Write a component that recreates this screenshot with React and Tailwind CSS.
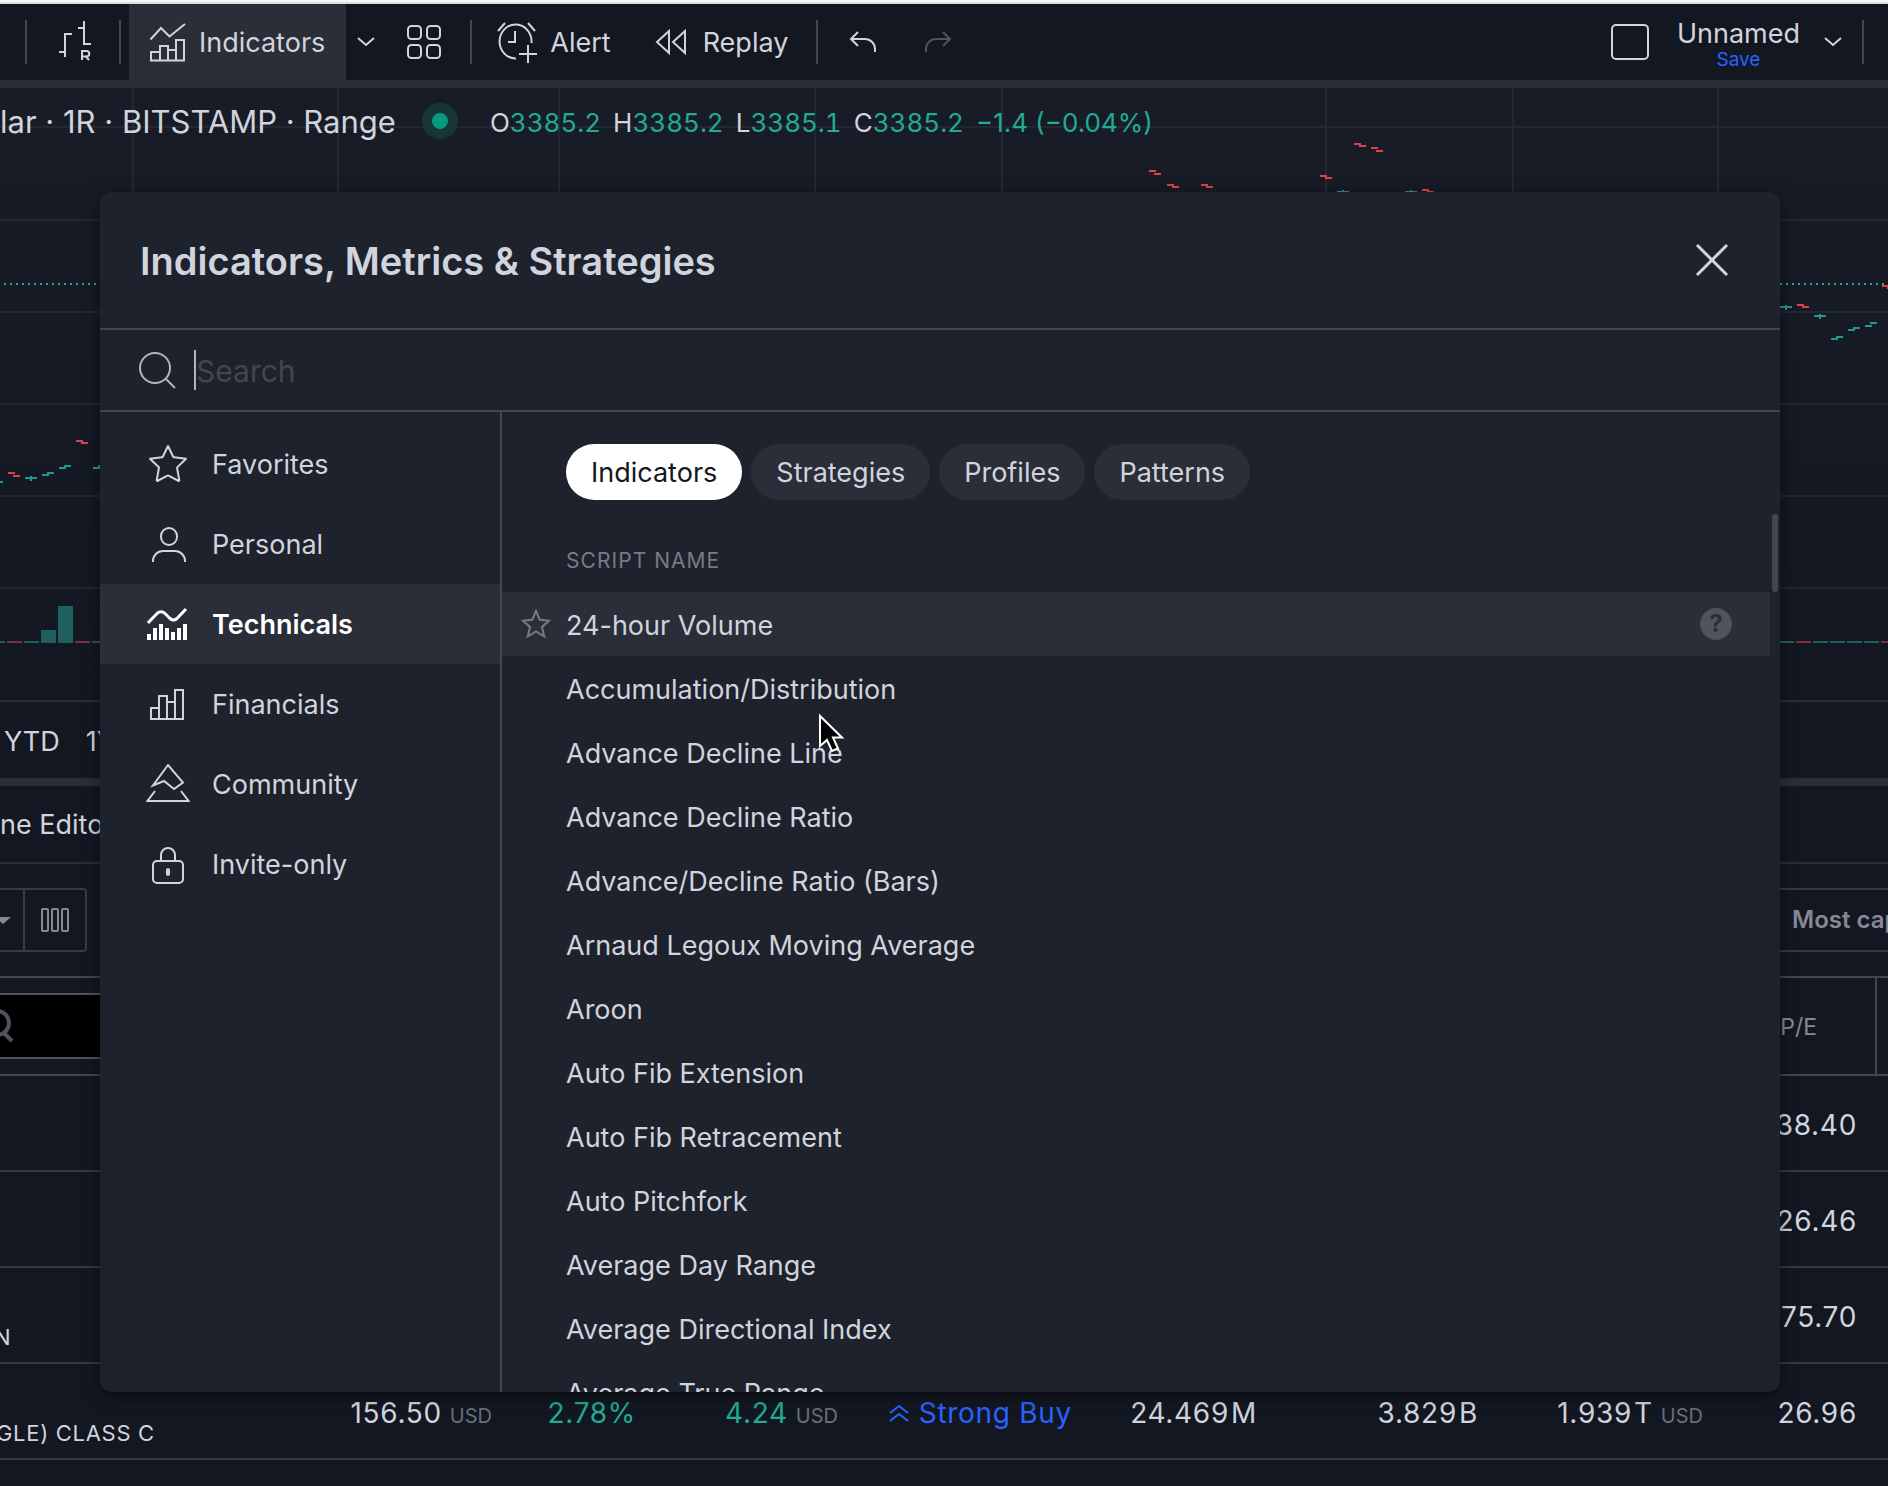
import clsx from 'clsx'

const SCRIPTS = [
  '24-hour Volume',
  'Accumulation/Distribution',
  'Advance Decline Line',
  'Advance Decline Ratio',
  'Advance/Decline Ratio (Bars)',
  'Arnaud Legoux Moving Average',
  'Aroon',
  'Auto Fib Extension',
  'Auto Fib Retracement',
  'Auto Pitchfork',
  'Average Day Range',
  'Average Directional Index',
  'Average True Range',
]

const TABS = ['Indicators', 'Strategies', 'Profiles', 'Patterns']

// x, y of the open, y of the close
const TICKS = [
  [-9, 482, 481],
  [8, 472, 475],
  [25, 477, 477],
  [42, 474, 472],
  [59, 467, 465],
  [76, 440, 442],
  [93, 467, 465],
  [1149, 170, 173],
  [1167, 184, 186],
  [1201, 184, 186],
  [1320, 175, 177],
  [1337, 191, 191],
  [1354, 143, 145],
  [1371, 147, 150],
  [1405, 191, 191],
  [1422, 189, 191],
  [1780, 306, 306],
  [1797, 304, 306],
  [1814, 315, 315],
  [1831, 338, 336],
  [1848, 329, 327],
  [1865, 325, 322],
  [1882, 285, 287],
]

// x, height, falling
const VOLUME = [
  [-10, 2, false],
  [7, 2, true],
  [24, 2, false],
  [41, 13, false],
  [58, 37, false],
  [75, 2, true],
  [92, 2, false],
  [1779, 2, false],
  [1796, 2, true],
  [1813, 2, false],
  [1830, 2, false],
  [1847, 2, false],
  [1864, 2, false],
  [1881, 2, true],
]

function Icon({ w, h, className, children }) {
  return (
    <svg
      width={w}
      height={h}
      viewBox={`0 0 ${w} ${h}`}
      fill="none"
      stroke="currentColor"
      strokeWidth="2"
      aria-hidden="true"
      className={clsx('shrink-0', className)}
    >
      {children}
    </svg>
  )
}

function ChevronIcon() {
  return (
    <Icon w={18} h={10}>
      <path d="M1 1l8 7 8-7" />
    </Icon>
  )
}

function StarIcon({ className }) {
  return (
    <Icon w={40} h={40} className={className}>
      <path
        strokeLinejoin="round"
        d="M20 2l5.200 10.800a1 1 0 0 0 .8.5l12 1.400-8.600 8.400a1 1 0 0 0-.3.9L31.300 36.500l-.6.5-10.200-5.400a1 1 0 0 0-1 0L9.300 37l-.6-.5 2.200-12.500a1 1 0 0 0-.3-.9L2 14.700l12-1.400a1 1 0 0 0 .8-.5z"
      />
    </Icon>
  )
}

function Divider() {
  return <div className="h-11 w-0.5 shrink-0 bg-[#434651]" />
}

function Toolbar() {
  return (
    <header className="flex h-[84px] shrink-0 items-center border-b-8 border-[#2a2e39] bg-[#131722] text-[27px] text-[#d1d4dc]">
      <div className="w-[25px] shrink-0" />
      <Divider />
      <button aria-label="Range bars" className="flex h-full w-[92px] shrink-0 items-center justify-center pl-1">
        <Icon w={32} h={42}>
          <path d="M0 31h6M6 36V13h7M19 7h6M25 0v23h7" />
          <path d="M23 39V30h4.500a2.500 2.500 0 0 1 0 5.500H23M27 35.500l3 3.500" />
        </Icon>
      </button>
      <Divider />
      <button className="ml-2 flex h-full shrink-0 items-center gap-3 bg-[#2a2e39] pr-[21px] pl-5">
        <Icon w={38} h={40}>
          <path d="M1.500 17.500L12 6l8.500 8.500L36 2" />
          <path d="M2 39V30h9V39M11 30v-6h8v15M19 28h8M27 39V18h8v21M1 38.500h35" />
        </Icon>
        <span className="pt-0.5">Indicators</span>
      </button>
      <button aria-label="Indicator templates" className="flex h-full w-10 shrink-0 items-center justify-center">
        <ChevronIcon />
      </button>
      <button aria-label="Layouts" className="flex h-full w-[76px] shrink-0 items-center justify-center">
        <Icon w={34} h={34}>
          <rect x="1" y="1" width="13" height="13" rx="3.500" />
          <rect x="20" y="1" width="13" height="13" rx="3.500" />
          <rect x="1" y="20" width="13" height="13" rx="3.500" />
          <rect x="20" y="20" width="13" height="13" rx="3.500" />
        </Icon>
      </button>
      <div className="w-2" />
      <Divider />
      <button className="flex h-full shrink-0 items-center gap-3 pl-6">
        <Icon w={42} h={42}>
          <path d="M35.500 22A16 17 0 1 0 20 37.500" />
          <path d="M2 10l7-8M39 10l-7-8M19 10v11h-7M32 24v18M23 33h18" />
        </Icon>
        <span className="pt-0.5">Alert</span>
      </button>
      <button className="flex h-full shrink-0 items-center gap-4 pl-11">
        <Icon w={32} h={26}>
          <path d="M14 2v22L2 13zM30 2v22L18 13z" />
        </Icon>
        <span className="pt-0.5">Replay</span>
      </button>
      <div className="w-7" />
      <Divider />
      <button aria-label="Undo" className="flex h-full w-[90px] shrink-0 items-center justify-center">
        <Icon w={28} h={22}>
          <path d="M9 1L2 8l7 7M2 8h14a10 10 0 0 1 10 10v3" />
        </Icon>
      </button>
      <button aria-label="Redo" className="flex h-full w-[60px] shrink-0 items-center justify-center text-[#50535e]">
        <Icon w={28} h={22}>
          <path d="M19 1l7 7-7 7M26 8H12A10 10 0 0 0 2 18v3" />
        </Icon>
      </button>
      <div className="flex-1" />
      <button aria-label="Single chart" className="flex h-full shrink-0 items-center">
        <Icon w={38} h={36}>
          <rect x="1" y="1" width="36" height="34" rx="4" />
        </Icon>
      </button>
      <div className="ml-7 flex flex-col items-center pt-1">
        <span className="leading-8">Unnamed</span>
        <button className="text-[19px] leading-5 text-[#2962ff]">Save</button>
      </div>
      <button aria-label="Manage layouts" className="ml-6 flex h-full shrink-0 items-center">
        <ChevronIcon />
      </button>
      <div className="w-5" />
      <Divider />
      <div className="w-6" />
    </header>
  )
}

function Quote({ label, value }) {
  return (
    <span>
      {label}
      <span className="text-[#22ab94]">{value}</span>
    </span>
  )
}

function Chart() {
  return (
    <section className="relative h-[614px] shrink-0 border-b-2 border-[#2a2e39] bg-linear-to-b from-[#181c27] to-[#131722]">
      <svg className="absolute inset-0 h-full w-full" aria-hidden="true">
        <g stroke="#232733" strokeWidth="2" transform="translate(0 -88)">
          {[133, 338, 559, 815, 1002, 1326, 1513, 1718].map((x) => (
            <line key={x} x1={x} x2={x} y1="88" y2="700" />
          ))}
          {[127, 220, 312, 404, 496, 588].map((y) => (
            <line key={y} x1="0" x2="100%" y1={y} y2={y} />
          ))}
        </g>
        <line x1="4" x2="100%" y1="196" y2="196" stroke="#22ab94" strokeWidth="2" strokeDasharray="2 4" />
        <g transform="translate(0 -88)">
          {TICKS.map(([x, open, close]) => (
            <g key={x} fill={close > open ? '#e0404a' : '#22998a'}>
              <rect x={x} y={open} width="7" height="2" />
              <rect x={x + 5} y={close} width="7" height="2" />
              {open === close && <rect x={x + 5} y={open - 1} width="2" height="5" />}
            </g>
          ))}
          {VOLUME.map(([x, height, down]) => (
            <rect key={x} x={x} y={643 - height} width="15" height={height} fill={down ? '#7a313d' : '#1f605f'} />
          ))}
        </g>
      </svg>
      <div className="relative flex items-center pt-3 whitespace-nowrap text-[#d1d4dc]">
        <span className="pt-0.5 text-[31px] leading-10">lar · 1R · BITSTAMP · Range</span>
        <span className="ml-[26px] flex size-9 items-center justify-center rounded-full bg-[#193436]">
          <span className="size-4 rounded-full bg-[#089981]" />
        </span>
        <div className="ml-8 flex gap-3 pt-0.5 text-[26px]">
          <div className="flex gap-3 tabular-nums">
            <Quote label="O" value="3385.2" />
            <Quote label="H" value="3385.2" />
            <Quote label="L" value="3385.1" />
            <Quote label="C" value="3385.2" />
          </div>
          <span className="text-[#22ab94]">−1.4 (−0.04%)</span>
        </div>
      </div>
    </section>
  )
}

function Unit({ children }) {
  return <span className="ml-2 text-[20px] tracking-normal text-[#6a6d78]">{children}</span>
}

function Scale({ children }) {
  return <span className="ml-0.5">{children}</span>
}

function Screener() {
  const cell = 'h-24 border-b-2 border-[#363a45] p-0 pt-1 pr-5'
  const nameCell = 'h-24 border-b-2 border-[#363a45] p-0 pt-11 text-left text-[22px]'
  const head = 'h-[98px] border-b-2 border-[#434651] p-0 font-normal'
  return (
    <section className="text-[#d1d4dc]">
      <div className="flex h-[114px] items-center overflow-hidden border-b-2 border-[#434651]">
        <div className="flex h-16 w-[87px] shrink-0 rounded-r border-2 border-l-0 border-[#363a45] text-[#868993]">
          <button aria-label="Screener presets" className="w-[25px] border-r-2 border-[#363a45]">
            <svg width="11" height="7" fill="currentColor" aria-hidden="true">
              <path d="M-5 0h16L3 7z" />
            </svg>
          </button>
          <button aria-label="Columns" className="flex flex-1 items-center justify-center">
            <Icon w={28} h={24}>
              <rect x="1" y="1" width="6" height="22" rx="1" />
              <rect x="11" y="1" width="6" height="22" rx="1" />
              <rect x="21" y="1" width="6" height="22" rx="1" />
            </Icon>
          </button>
        </div>
        <button className="ml-auto h-16 w-[212px] shrink-0 overflow-hidden border-y-2 border-[#363a45] pl-[116px] text-left text-[24px] font-semibold whitespace-nowrap text-[#868993]">
          Most capitalized
        </button>
      </div>
      <table className="w-full table-fixed border-separate border-spacing-0 text-right text-[28px] tracking-wide whitespace-nowrap">
        <colgroup>
          <col className="w-[300px]" />
          <col className="w-[212px]" />
          <col className="w-[144px]" />
          <col className="w-[202px]" />
          <col className="w-[234px]" />
          <col className="w-[185px]" />
          <col className="w-[221px]" />
          <col className="w-[225px]" />
          <col className="w-[154px]" />
          <col />
        </colgroup>
        <thead>
          <tr>
            <th className={head} colSpan={8}>
              <div className="flex h-[66px] items-center border-y-2 border-[#50535e] bg-black text-[#50535e]">
                <svg width="14" height="36" fill="none" stroke="currentColor" strokeWidth="4" aria-hidden="true">
                  <circle cx="-3" cy="15" r="12" />
                  <path d="M4 25l8 8" />
                </svg>
              </div>
            </th>
            <th className="h-[98px] border-r-2 border-b-2 border-[#434651] p-0 pt-0.5 pr-[58px] text-[23px] font-normal tracking-normal text-[#868993]">
              P/E
            </th>
            <th className={head} />
          </tr>
        </thead>
        <tbody>
          {[
            ['', '38.40'],
            ['', '26.46'],
            ['N', '75.70'],
          ].map(([name, pe]) => (
            <tr key={pe}>
              <td colSpan={8} className={nameCell}>
                <span className="-ml-1.5">{name}</span>
              </td>
              <td className={cell}>{pe}</td>
              <td className={cell} />
            </tr>
          ))}
          <tr>
            <td className={nameCell}>
              <span className="-ml-1">GLE) CLASS C</span>
            </td>
            <td className={cell}>
              156.50
              <Unit>USD</Unit>
            </td>
            <td className={clsx(cell, 'text-[#22ab94]')}>2.78%</td>
            <td className={clsx(cell, 'text-[#22ab94]')}>
              4.24
              <Unit>USD</Unit>
            </td>
            <td className={clsx(cell, 'text-[#2962ff]')}>
              <span className="flex items-center justify-end gap-2.5">
                <Icon w={20} h={18}>
                  <path d="M1 9l9-7 9 7M1 17l9-7 9 7" />
                </Icon>
                Strong Buy
              </span>
            </td>
            <td className={cell}>
              24.469
              <Scale>M</Scale>
            </td>
            <td className={cell}>
              3.829
              <Scale>B</Scale>
            </td>
            <td className={cell}>
              1.939
              <Scale>T</Scale>
              <Unit>USD</Unit>
            </td>
            <td className={cell}>26.96</td>
            <td className={cell} />
          </tr>
        </tbody>
      </table>
    </section>
  )
}

const CATEGORIES = [
  { name: 'Favorites', icon: <StarIcon /> },
  {
    name: 'Personal',
    icon: (
      <Icon w={40} h={40}>
        <rect x="13" y="4" width="16" height="17" rx="8" />
        <path d="M5 38v-1a10 10 0 0 1 10-10h12a10 10 0 0 1 10 10v1" />
      </Icon>
    ),
  },
  {
    name: 'Technicals',
    active: true,
    icon: (
      <Icon w={42} h={40}>
        <path strokeWidth="3" d="M1 19L10 9.500q4-3.500 8 0l5 5q3.500 3 7 0L39 5" />
        <path strokeWidth="4" d="M2 36v-6M8 36V24M14 36V20M20 36V24M26 36v-8M32 36V24M38 36V20" />
      </Icon>
    ),
  },
  {
    name: 'Financials',
    icon: (
      <Icon w={40} h={40}>
        <path d="M3 35V24h8M11 35V12h8v23M19 18h8M27 35V6h8v29M2 35h34" />
      </Icon>
    ),
  },
  {
    name: 'Community',
    icon: (
      <Icon w={44} h={40}>
        <path d="M22 1L7 21.500l11-4.500 10 8 9-6.500z" />
        <path d="M9 27L1.500 37h41L35 27" />
      </Icon>
    ),
  },
  {
    name: 'Invite-only',
    icon: (
      <Icon w={40} h={42}>
        <rect x="5" y="18" width="30" height="22" rx="4" />
        <path d="M13 18v-6a7 7 0 0 1 14 0v6" />
        <rect x="19" y="26" width="2" height="6" rx="1" />
      </Icon>
    ),
  },
]

function IndicatorsDialog() {
  return (
    <div
      role="dialog"
      aria-label="Indicators, Metrics & Strategies"
      className="flex h-full flex-col overflow-hidden rounded-xl bg-[#1e222d] text-[27px] text-[#d1d4dc] shadow-[0_4px_16px_rgba(0,0,0,0.5)]"
    >
      <div className="flex h-[138px] shrink-0 items-center justify-between border-b-2 border-[#434651] pr-[51px] pl-10">
        <h2 className="pt-0.5 text-[38px] font-semibold">Indicators, Metrics &amp; Strategies</h2>
        <button aria-label="Close">
          <Icon w={34} h={34}>
            <path strokeWidth="3" d="M2 2l30 30M32 2L2 32" />
          </Icon>
        </button>
      </div>

      <label className="flex h-[82px] shrink-0 items-center border-b-2 border-[#434651] pl-[39px]">
        <Icon w={38} h={38} className="text-[#b2b5be]">
          <circle cx="16" cy="17" r="15" />
          <path d="M27 28l9 9" />
        </Icon>
        <span className="ml-[17px] h-10 w-0.5 bg-[#b2b5be]" />
        <input
          type="text"
          aria-label="Search"
          placeholder="Search"
          className="flex-1 bg-transparent pt-0.5 text-[30px] outline-none placeholder:text-[#434651]"
        />
      </label>

      <div className="flex min-h-0 flex-1">
        <nav className="w-[402px] shrink-0 border-r-2 border-[#434651] pt-3">
          {CATEGORIES.map(({ name, icon, active }) => (
            <button
              key={name}
              className={clsx(
                'flex h-20 w-full items-center pl-[46px]',
                active && 'bg-[#2a2e39] font-semibold text-white'
              )}
            >
              <span className="mr-[22px] flex w-11 justify-center">{icon}</span>
              <span className="pt-0.5">{name}</span>
            </button>
          ))}
        </nav>

        <div className="relative min-w-0 flex-1 overflow-hidden pt-8">
          <div className="flex gap-[9px] pl-16">
            {TABS.map((tab, i) => (
              <button
                key={tab}
                className={clsx(
                  'h-14 rounded-full px-[25px] pt-0.5',
                  i === 0 ? 'bg-white text-[#131722]' : 'bg-[#2a2e39]'
                )}
              >
                {tab}
              </button>
            ))}
          </div>
          <div className="flex h-[92px] items-center pt-[30px] pl-16 text-[21px] tracking-wider text-[#787b86]">
            SCRIPT NAME
          </div>
          <ul className="pr-2.5">
            {SCRIPTS.map((name, i) => (
              <li key={name} className={clsx('flex h-16 items-center', i === 0 ? 'bg-[#2a2e39] pl-[19px]' : 'pl-16')}>
                {i === 0 && (
                  <button aria-label="Add to favorites" className="mr-[15px] text-[#787b86]">
                    <Icon w={30} h={30}>
                      <path d="M15 2l3.800 8.800 9.200.9-7 6.200 2.200 9.600L15 22.500l-8.200 5L9 17.900l-7-6.200 9.200-.9z" />
                    </Icon>
                  </button>
                )}
                <span className="pt-1">{name}</span>
                {i === 0 && (
                  <button
                    aria-label="Help"
                    className="mr-[38px] ml-auto flex size-8 items-center justify-center rounded-full bg-[#50535e] text-[24px] font-bold text-[#2a2e39]"
                  >
                    ?
                  </button>
                )}
              </li>
            ))}
          </ul>
          <div className="absolute top-[102px] right-0.5 h-[78px] w-1.5 rounded-full bg-[#434651]" />
        </div>
      </div>
    </div>
  )
}

export default function App() {
  return (
    <div className="relative flex h-screen flex-col overflow-hidden bg-[#131722] font-['Inter',sans-serif]">
      <div className="h-1 shrink-0 border-b-2 border-[#dedede] bg-[#f6f6f2]" />
      <Toolbar />
      <Chart />
      <div className="flex h-[84px] shrink-0 items-center gap-[26px] border-b-8 border-[#2a2e39] pt-1 pl-1 text-[27px] text-[#d1d4dc]">
        <button>YTD</button>
        <button>1Y</button>
      </div>
      <div className="flex h-[78px] shrink-0 items-center border-b-2 border-[#2a2e39] pt-0.5 text-[27px] text-[#d1d4dc]">
        <button>ne Editor</button>
      </div>
      <Screener />

      <div className="absolute inset-0 pt-48 pr-[108px] pb-[94px] pl-[100px]">
        <IndicatorsDialog />
      </div>

      {/* mouse pointer */}
      <svg
        width="28"
        height="42"
        viewBox="0 0 28 42"
        className="absolute top-[713px] left-[818px]"
        fill="#000"
        stroke="#fff"
        strokeWidth="2"
        aria-hidden="true"
      >
        <path d="M2 3v30l7-6 5 11 6-2.500-5-11h9z" />
      </svg>
    </div>
  )
}
